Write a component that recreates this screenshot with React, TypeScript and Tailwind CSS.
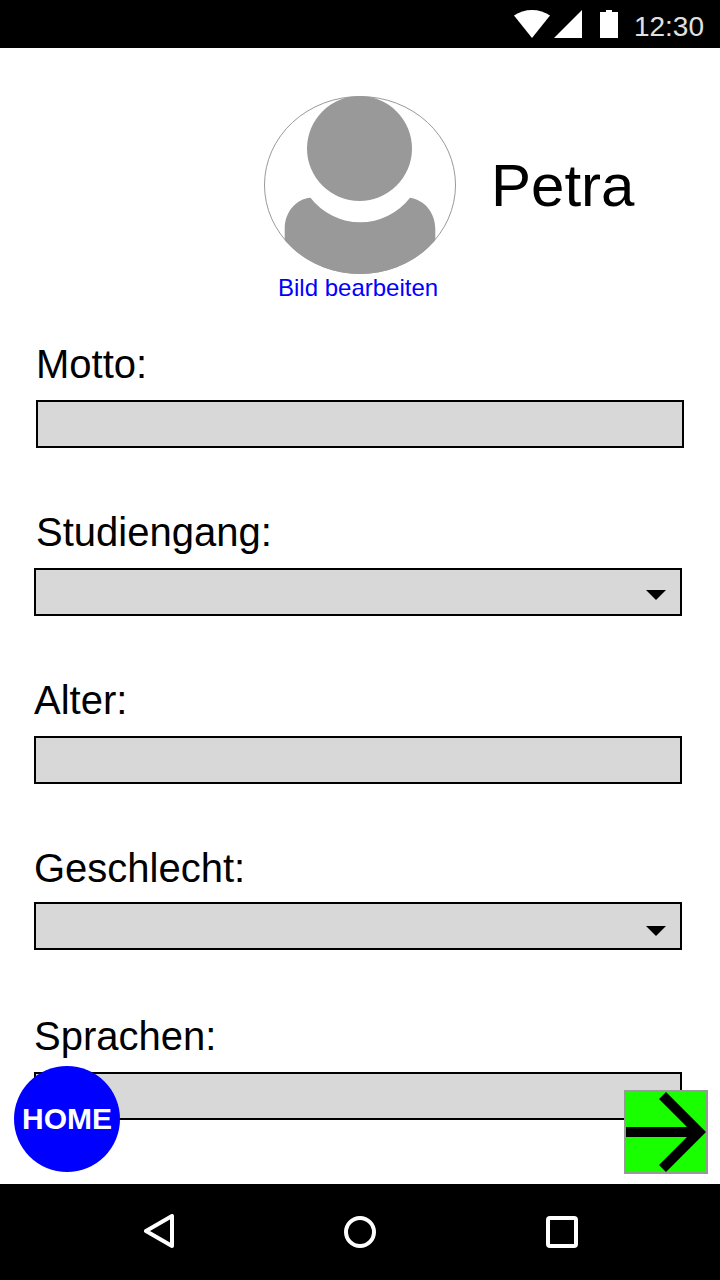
import React from "react";

type FieldProps = {
  label: string;
  select?: boolean;
  className?: string;
  labelClassName?: string;
  controlClassName?: string;
  caretClassName?: string;
};

function Caret({ className = "" }: { className?: string }) {
  return (
    <svg className={`h-[10px] w-5 ${className}`} viewBox="0 0 20 10">
      <path d="M0 0h20L10 10z" fill="#000" />
    </svg>
  );
}

function Field({
  label,
  select = false,
  className = "ml-[34px]",
  labelClassName = "",
  controlClassName = "mt-4",
  caretClassName = "mt-1.5",
}: FieldProps) {
  return (
    <div className={`h-[168px] w-[648px] shrink-0 ${className}`}>
      <div className={`text-[40px] leading-10 whitespace-nowrap ${labelClassName}`}>{label}</div>
      {select ? (
        <button
          type="button"
          aria-label={label}
          className={`flex h-12 w-full items-center justify-end border-2 border-black bg-[#d8d8d8] pr-[14px] ${controlClassName}`}
        >
          <Caret className={caretClassName} />
        </button>
      ) : (
        <input
          type="text"
          aria-label={label}
          className={`block h-12 w-full rounded-none border-2 border-black bg-[#d8d8d8] px-3 text-2xl outline-none ${controlClassName}`}
        />
      )}
    </div>
  );
}

function StatusBar() {
  return (
    <header className="flex h-12 shrink-0 items-start justify-end bg-black pr-4">
      <svg className="mt-[10px] h-7 w-9" viewBox="0 0 36 28" fill="#fff">
        <path d="M0 5.6C5.2 2 11.2 0 18 0s12.8 2 18 5.6L18 28z" />
      </svg>
      <svg className="mt-[10px] ml-1 h-7 w-7" viewBox="0 0 28 28" fill="#fff">
        <path d="M28 0v28H0z" />
      </svg>
      <svg className="mt-[10px] ml-[18px] h-7 w-[18px]" viewBox="0 0 18 28" fill="#fff">
        <path d="M6 0h6v2h6v26H0V2h6z" />
      </svg>
      <span className="mt-[13px] ml-4 text-[28px] leading-7 text-[#e0e0e0]">12:30</span>
    </header>
  );
}

function Avatar() {
  return (
    <svg className="h-[178px] w-48" viewBox="264 96 192 178">
      <defs>
        <clipPath id="avatar-outline">
          <ellipse cx="360" cy="185" rx="96" ry="89" />
        </clipPath>
      </defs>
      <ellipse cx="360" cy="185" rx="95.5" ry="88.5" fill="#fff" stroke="#999" />
      <g clipPath="url(#avatar-outline)" fill="#999">
        <circle cx="359.5" cy="148.5" r="52.5" />
        <path d="M310.5 197.8C296 199 284.7 212 284.7 229V275H435.3V229C435.3 212 424 200 410 197.8A62.7 62.7 0 0 1 310.5 197.8Z" />
      </g>
    </svg>
  );
}

function NavBar() {
  return (
    <nav className="flex h-24 shrink-0 items-center bg-black pr-[142px] pl-36">
      <svg className="h-9 w-8" viewBox="144 1214 32 36" fill="none" stroke="#fff" strokeWidth="4" strokeLinejoin="round">
        <path d="M172 1216v30l-26-15z" />
      </svg>
      <svg className="ml-[168px] h-8 w-8" viewBox="0 0 32 32" fill="none" stroke="#fff" strokeWidth="4">
        <circle cx="16" cy="16" r="14" />
      </svg>
      <svg className="ml-[170px] h-8 w-8" viewBox="0 0 32 32" fill="none" stroke="#fff" strokeWidth="4">
        <rect x="2" y="2" width="28" height="28" rx="2" />
      </svg>
    </nav>
  );
}

export default function App() {
  return (
    <div className="relative flex h-[1280px] w-[720px] flex-col overflow-hidden bg-white font-['Liberation_Sans',Arial,sans-serif] text-black">
      <StatusBar />
      <main className="flex h-[1136px] shrink-0 flex-col overflow-hidden">
        <section className="flex h-[296px] shrink-0 items-start pt-12 pl-[264px]">
          <div className="flex w-48 flex-col">
            <Avatar />
            <a href="#bild" className="mt-[2px] ml-[14px] text-2xl leading-6 whitespace-nowrap text-[#0000ff]">
              Bild bearbeiten
            </a>
          </div>
          <h1 className="mt-[60px] ml-[35px] text-[60px] leading-[60px]">Petra</h1>
        </section>
        <Field label="Motto:" className="ml-9" />
        <Field label="Studiengang:" select labelClassName="pl-[2px]" />
        <Field label="Alter:" />
        <Field label="Geschlecht:" select controlClassName="mt-[14px]" caretClassName="mt-[10px]" />
        <Field label="Sprachen:" />
      </main>
      <NavBar />
      <button
        type="button"
        className="absolute top-[1066px] left-[14px] flex h-[106px] w-[106px] items-center justify-center rounded-full bg-[#0000ff] text-[30px] leading-[30px] font-bold text-white"
      >
        HOME
      </button>
      <button
        type="button"
        aria-label="Weiter"
        className="absolute top-[1090px] left-[624px] h-[84px] w-[84px] border-2 border-[#999] bg-[#1aff00]"
      >
        <svg className="block h-20 w-20" viewBox="0 0 80 80">
          <path d="M40 0l40 40-40 40-7-7 28-28H0V35h61L33 7z" fill="#000" />
        </svg>
      </button>
    </div>
  );
}
